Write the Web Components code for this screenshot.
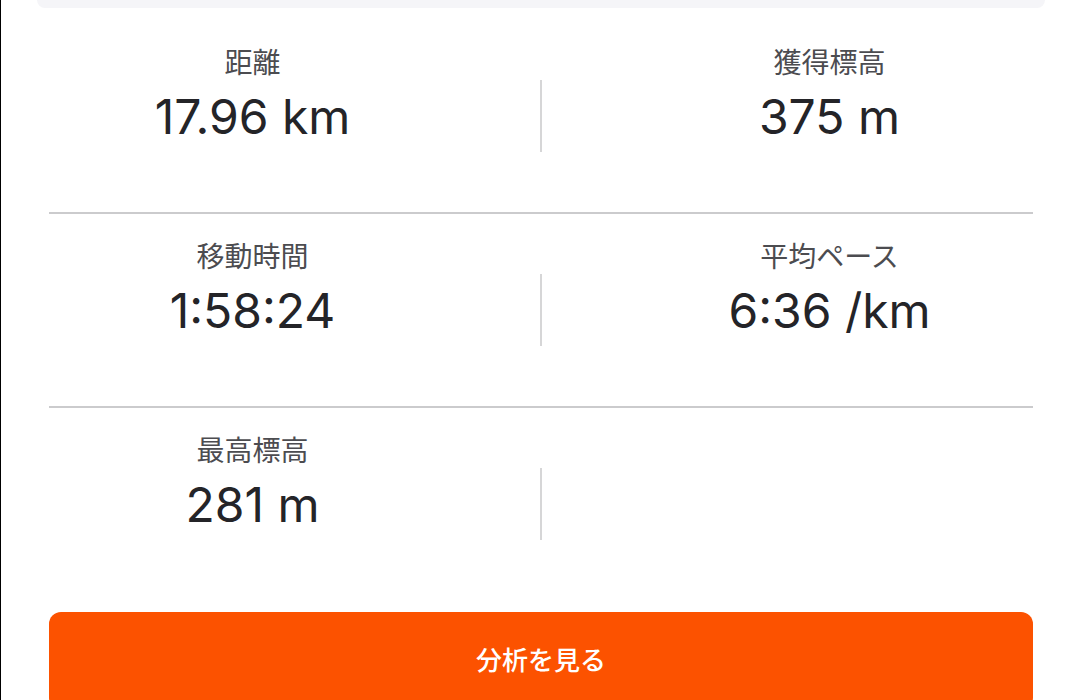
<!DOCTYPE html>
<html lang="ja">
<head>
<meta charset="UTF-8">
<meta name="viewport" content="width=device-width, initial-scale=1">
<title>アクティビティ</title>
<style>
    html {
        scrollbar-width: none;
    }
    body {
        margin: 0;
        background: #fff;
        color: #242428;
        font-family: Inter, "Noto Sans CJK JP", sans-serif;
    }
</style>
</head>
<body>
<activity-summary>
    <stat-row>
        <stat-item slot="start" label="距離">17.96 km</stat-item>
        <stat-item slot="end" label="獲得標高">375 m</stat-item>
    </stat-row>
    <stat-row>
        <stat-item slot="start" label="移動時間">1:58:24</stat-item>
        <stat-item slot="end" label="平均ペース">6:36 /km</stat-item>
    </stat-row>
    <stat-row>
        <stat-item slot="start" label="最高標高">281 m</stat-item>
    </stat-row>
    <action-button slot="action">分析を見る</action-button>
</activity-summary>

<script>
class ActivitySummary extends HTMLElement {
    constructor() {
        super();
        this.attachShadow({ mode: 'open' });

        const template = document.createElement('template');
        template.innerHTML = `
            <style>
                :host {
                    display: flex;
                    flex-direction: column;
                    box-sizing: border-box;
                    min-height: 100vh;
                    padding: 0 47px 0 48px;
                    border-left: 1px solid #000;
                }
                .card-end {
                    height: 8px;
                    margin: 0 -12px 12px;
                    border-radius: 0 0 10px 10px;
                    background: #f5f5f8;
                }
                .action {
                    margin-top: 12px;
                }
            </style>
            <div class="card-end"></div>
            <slot></slot>
            <div class="action"><slot name="action"></slot></div>
        `;

        this.shadowRoot.appendChild(template.content.cloneNode(true));
    }
}

class StatRow extends HTMLElement {
    constructor() {
        super();
        this.attachShadow({ mode: 'open' });

        const template = document.createElement('template');
        template.innerHTML = `
            <style>
                :host {
                    display: grid;
                    grid-template-columns: 1fr 2px 1fr;
                    column-gap: 84px;
                    min-height: 192px;
                    border-bottom: 2px solid #cbcbcd;
                }
                :host(:last-of-type) {
                    border-bottom: 0;
                }
                .divider {
                    align-self: center;
                    height: 72px;
                    background: #d6d6d7;
                }
            </style>
            <div><slot name="start"></slot></div>
            <div class="divider"></div>
            <div><slot name="end"></slot></div>
        `;

        this.shadowRoot.appendChild(template.content.cloneNode(true));
    }
}

class StatItem extends HTMLElement {
    constructor() {
        super();
        this.attachShadow({ mode: 'open' });

        const template = document.createElement('template');
        template.innerHTML = `
            <style>
                :host {
                    display: block;
                    padding-top: 25px;
                    text-align: center;
                }
                dl, dd {
                    margin: 0;
                }
                dt {
                    color: #4c4c50;
                    font-size: 28px;
                    line-height: 36px;
                }
                dd {
                    margin-top: 6px;
                    font-size: 48px;
                    line-height: 60px;
                    white-space: nowrap;
                }
            </style>
            <dl>
                <dt></dt>
                <dd><slot></slot></dd>
            </dl>
        `;

        this.shadowRoot.appendChild(template.content.cloneNode(true));
        this.labelElement = this.shadowRoot.querySelector('dt');
    }

    static get observedAttributes() {
        return ['label'];
    }

    attributeChangedCallback(name, oldValue, newValue) {
        if (name === 'label') {
            this.labelElement.textContent = newValue;
        }
    }
}

class ActionButton extends HTMLElement {
    constructor() {
        super();
        this.attachShadow({ mode: 'open' });

        const template = document.createElement('template');
        template.innerHTML = `
            <style>
                :host {
                    display: block;
                }
                button {
                    display: block;
                    width: 100%;
                    padding: 30px 24px;
                    border: 0;
                    border-radius: 12px;
                    background: #fc5200;
                    color: #fff;
                    font: inherit;
                    font-size: 26px;
                    font-weight: 500;
                    line-height: 38px;
                    cursor: pointer;
                }
            </style>
            <button type="button"><slot></slot></button>
        `;

        this.shadowRoot.appendChild(template.content.cloneNode(true));
    }
}

customElements.define('activity-summary', ActivitySummary);
customElements.define('stat-row', StatRow);
customElements.define('stat-item', StatItem);
customElements.define('action-button', ActionButton);
</script>
</body>
</html>
